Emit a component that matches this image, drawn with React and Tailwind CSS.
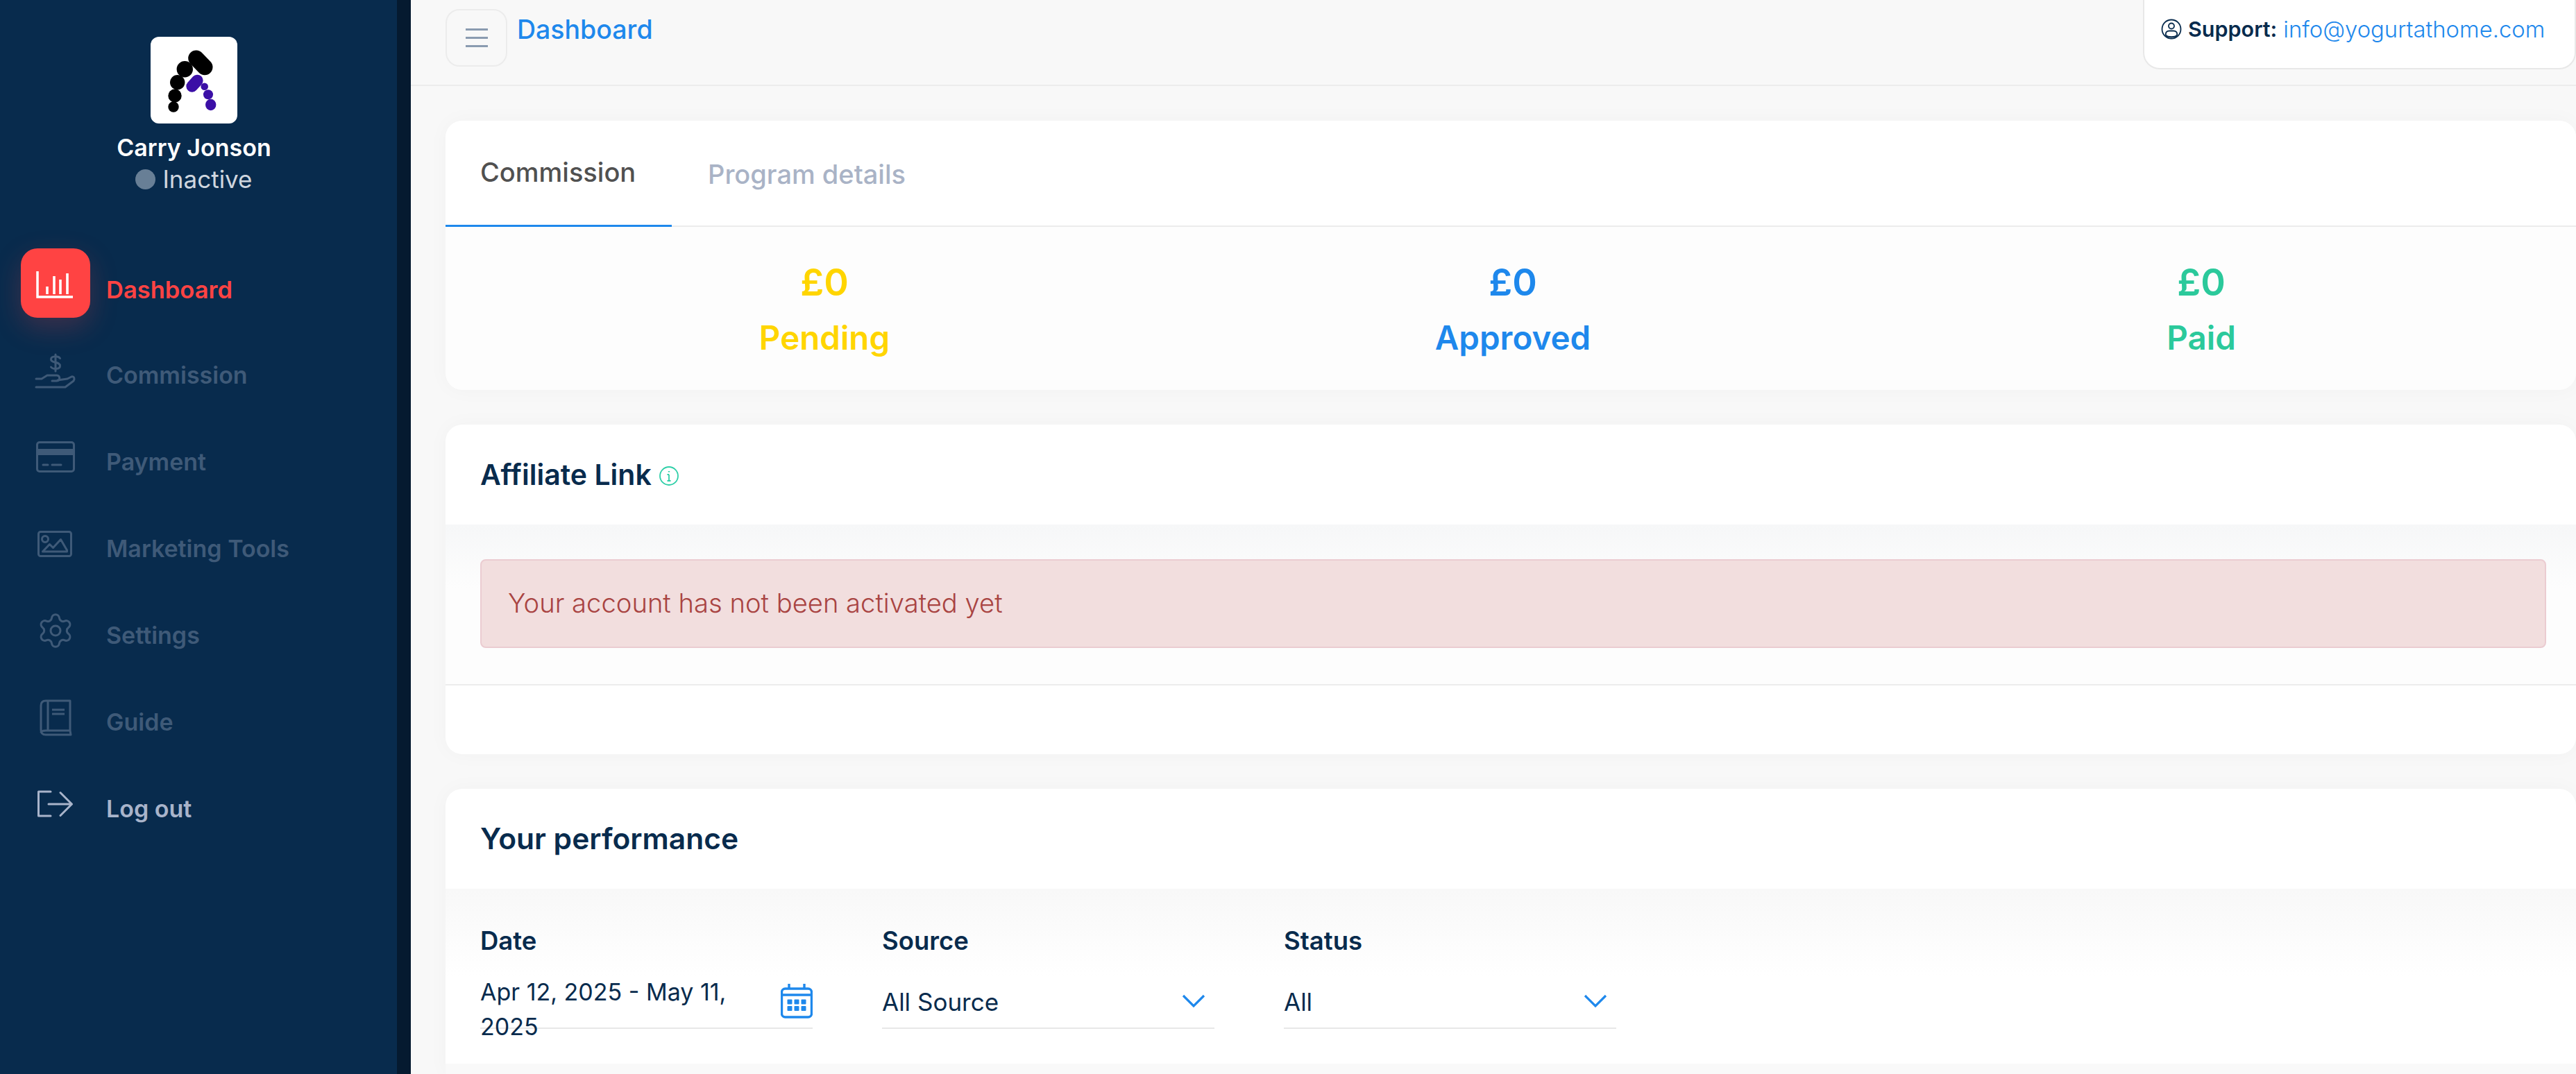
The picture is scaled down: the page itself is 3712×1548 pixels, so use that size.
import React from "react";
import { Settings } from "lucide-react";

function Logo() {
	return (
		<svg viewBox="0 0 125 125" className="w-[125px] h-[125px] rounded-[12px] bg-white">
			<circle cx="33" cy="101" r="7.7" fill="#000" />
			<circle cx="35" cy="85" r="9.7" fill="#000" />
			<circle cx="38.7" cy="65.7" r="10.7" fill="#000" />
			<circle cx="49.3" cy="46.7" r="11.7" fill="#000" />
			<path d="M65.7 31 L78 43.7" stroke="#000" strokeWidth="23" strokeLinecap="round" />
			<path d="M67.3 63 L59.7 71.3" stroke="#3b0fa6" strokeWidth="16.7" strokeLinecap="round" />
			<circle cx="77.7" cy="71.7" r="5.3" fill="#3b0fa6" />
			<circle cx="83" cy="83.3" r="7" fill="#3b0fa6" />
			<ellipse cx="86.7" cy="98" rx="7.7" ry="8.3" fill="#3b0fa6" />
		</svg>
	);
}

function ChartIcon() {
	return (
		<svg viewBox="0 0 60 46" className="w-[60px] h-[46px]" fill="none" stroke="#fff" strokeWidth="3.5">
			<path d="M4 6 V43 H55" />
			<path d="M18 28 V39 M28 13 V39 M37 18 V39 M47 9 V39" strokeWidth="3.6" />
		</svg>
	);
}

function HandIcon() {
	return (
		<svg viewBox="0 0 80 64" className="w-[80px] h-[64px]" fill="none" stroke="#3f5a78" strokeWidth="3" strokeLinecap="round" strokeLinejoin="round">
			<path d="M40 9 V33" />
			<path d="M46.5 14.5 C44 11 33.5 10.5 33.5 16 C33.5 22 46.5 18.5 46.5 25.5 C46.5 30.5 36 30.5 33.5 27" />
			<path d="M12 44 H20 L28 39 H42 C47 39 47 47 42 47 H35" />
			<path d="M43 46 L57 44 L63 41 C67 40 68 44 66 47 L54 56 H12" />
		</svg>
	);
}

function CardIcon() {
	return (
		<svg viewBox="0 0 80 50" className="w-[80px] h-[50px]" fill="none" stroke="#3f5a78" strokeWidth="3" strokeLinecap="round">
			<rect x="13.5" y="3.5" width="53" height="42" rx="3.5" />
			<rect x="13.5" y="13" width="53" height="9" fill="#3f5a78" stroke="none" />
			<path d="M22 36 H29 M35 36 H48" />
		</svg>
	);
}

function ImageIcon() {
	return (
		<svg viewBox="0 0 80 50" className="w-[80px] h-[50px]" fill="none" stroke="#3f5a78" strokeWidth="3" strokeLinejoin="round">
			<rect x="15.5" y="7.5" width="47" height="35" rx="3" />
			<circle cx="25" cy="18" r="4.5" />
			<path d="M21.5 36 L31.5 25.5 L36.5 30.5 L47.5 18.5 L56.5 34 V36 Z" />
		</svg>
	);
}

function BookIcon() {
	return (
		<svg viewBox="0 0 80 56" className="w-[80px] h-[56px]" fill="none" stroke="#3f5a78" strokeWidth="3" strokeLinejoin="round">
			<path d="M61 47 V4 H26 C21 4 19 7 19 11 V46 C19 51 22 53 26 53 H62 L61 47 H26 C22 47 19 48 19 50" />
			<path d="M29 4 V47" />
			<path d="M35 17 H53 M35 23 H53" />
		</svg>
	);
}

function LogoutIcon() {
	return (
		<svg viewBox="0 0 80 50" className="w-[80px] h-[50px]" fill="none" stroke="#a9b4ca" strokeWidth="3" strokeLinecap="round" strokeLinejoin="round">
			<path d="M33 7 H15.5 V42 H33" />
			<path d="M30 25 H63.5 M47 8.5 L63.5 25 L47 41.5" />
		</svg>
	);
}

function SupportIcon() {
	return (
		<svg viewBox="0 0 30 30" className="w-[30px] h-[30px] shrink-0" fill="none" stroke="#082b4d" strokeWidth="1.8">
			<circle cx="15" cy="15" r="13.5" />
			<circle cx="15" cy="10.5" r="4" />
			<path d="M7 24 C6 19 9 17.5 12 17.5 H18 C21 17.5 24 19 23 24" />
			<path d="M7 24 C10 27 20 27 23 24" />
		</svg>
	);
}

function InfoIcon() {
	return (
		<svg viewBox="0 0 30 30" className="w-[30px] h-[30px] shrink-0 mt-[4px]" fill="none" stroke="#2fcfa8" strokeWidth="1.8">
			<circle cx="15" cy="15" r="13" />
			<path d="M15 13 V22 M12.5 13 H15 M12.5 22 H17.5" />
			<path d="M15 8 V9.5" strokeWidth="2.4" />
		</svg>
	);
}

function CalendarIcon() {
	return (
		<svg viewBox="2 0 46 54" className="w-[46px] h-[54px] shrink-0" fill="none" stroke="#1e88ec" strokeWidth="3.4">
			<rect x="3.5" y="9" width="43" height="41" rx="5" />
			<path d="M3.5 18 H46.5" />
			<path d="M14 2 V9 M36 2 V9" />
			<g fill="#1e88ec" stroke="none">
				<rect x="11.5" y="24.5" width="7" height="7" rx="1" />
				<rect x="21.5" y="24.5" width="7" height="7" rx="1" />
				<rect x="31.5" y="24.5" width="7" height="7" rx="1" />
				<rect x="11.5" y="34" width="7" height="7" rx="1" />
				<rect x="21.5" y="34" width="7" height="7" rx="1" />
				<rect x="31.5" y="34" width="7" height="7" rx="1" />
			</g>
		</svg>
	);
}

function Chevron() {
	return (
		<svg viewBox="0 0 34 20" className="w-[34px] h-[20px] shrink-0 mr-[13px]" fill="none" stroke="#1e88ec" strokeWidth="3.2">
			<path d="M2 2 L17 17 L32 2" />
		</svg>
	);
}

const navItems = [
	{ label: "Commission", icon: <HandIcon /> },
	{ label: "Payment", icon: <CardIcon /> },
	{ label: "Marketing Tools", icon: <ImageIcon /> },
	{ label: "Settings", icon: <Settings size={56} strokeWidth={1.3} color="#3f5a78" /> },
	{ label: "Guide", icon: <BookIcon /> },
];

const stats = [
	{ label: "Pending", color: "text-[#ffd500]" },
	{ label: "Approved", color: "text-[#1e88ec]" },
	{ label: "Paid", color: "text-[#2bc99b]" },
];

function NavRow({ icon, label, textClass }) {
	return (
		<div className="flex items-center h-[125px] pl-[30px]">
			<div className="w-[100px] flex justify-center">{icon}</div>
			<span className={`ml-[23px] pt-[14px] text-[34px] font-semibold leading-[40px] ${textClass}`}>{label}</span>
		</div>
	);
}

function Sidebar() {
	return (
		<aside className="w-[592px] shrink-0 bg-[#082b4d] border-r-[20px] border-[#051a30] flex flex-col">
			<div className="flex flex-col items-center pt-[53px] pr-[13px] h-[358px]">
				<Logo />
				<div className="mt-[14px] text-[34px] leading-[42px] font-semibold text-white">Carry Jonson</div>
				<div className="mt-[3px] flex items-center gap-[10px] text-[35px] leading-[42px] text-[#cfd6df]">
					<span className="w-[29px] h-[29px] rounded-full bg-[#687f96]" />
					Inactive
				</div>
			</div>
			<div className="flex items-start h-[113px] pl-[30px]">
				<div className="w-[100px] h-[100px] rounded-[24px] bg-[#ff4343] flex items-center justify-center shadow-[0_14px_40px_rgba(255,67,67,0.22)]">
					<ChartIcon />
				</div>
				<span className="ml-[23px] pt-[40px] text-[34.5px] font-semibold leading-[40px] text-[#ff4343]">Dashboard</span>
			</div>
			{navItems.map((item) => (
				<NavRow key={item.label} icon={item.icon} label={item.label} textClass="text-[#3f5a78]" />
			))}
			<NavRow icon={<LogoutIcon />} label="Log out" textClass="text-[#a9b4ca]" />
		</aside>
	);
}

function Header() {
	return (
		<header className="h-[124px] shrink-0 border-b-2 border-[#ececec] pl-[50px] flex items-start">
			<button className="mt-[13px] w-[89px] h-[83px] rounded-[20px] border-2 border-[#ececec] flex flex-col items-center justify-center gap-[9px]">
				<span className="w-[32px] h-[3px] bg-[#8a9bb0]" />
				<span className="w-[32px] h-[3px] bg-[#8a9bb0]" />
				<span className="w-[32px] h-[3px] bg-[#8a9bb0]" />
			</button>
			<span className="ml-[14px] mt-[18px] text-[37.5px] leading-[50px] font-medium text-[#1e88ec]">Dashboard</span>
			<div className="ml-auto w-[624px] h-[100px] bg-white border-2 border-t-0 border-[#e8e8e8] rounded-b-[24px] pl-[24px] pt-[18px] flex items-center self-start">
				<div className="flex items-center gap-[9px] -mt-[32px] leading-[50px] whitespace-nowrap">
					<SupportIcon />
					<b className="text-[30.5px] font-semibold text-[#082b4d]">Support:</b>
					<span className="text-[32.8px] font-light text-[#1e88ec]">info@yogurtathome.com</span>
				</div>
			</div>
		</header>
	);
}

function CommissionCard() {
	return (
		<section className="h-[388px] shrink-0 bg-[#fdfdfd] rounded-[24px] overflow-hidden shadow-[0_0_30px_rgba(0,0,0,0.03)]">
			<div className="h-[153px] bg-white border-b-2 border-[#ececec] flex">
				<div className="w-[326px] h-[153px] border-b-[3px] border-[#1e88ec] pl-[50px] pt-[49px] text-[38px] leading-[50px] font-medium text-[#505050]">Commission</div>
				<div className="pl-[52px] pt-[52px] text-[38px] leading-[50px] font-medium text-[#a9b3c6]">Program details</div>
			</div>
			<div className="grid grid-cols-3 pl-[50px] pr-[44px]">
				{stats.map(({ label, color }) => (
					<div key={label} className={`text-center font-semibold ${color}`}>
						<div className="mt-[50px] text-[54px] leading-[60px]">£0</div>
						<div className="mt-[20px] text-[47.5px] leading-[60px]">{label}</div>
					</div>
				))}
			</div>
		</section>
	);
}

function AffiliateCard() {
	return (
		<section className="h-[475px] shrink-0 bg-white rounded-[24px] overflow-hidden shadow-[0_0_30px_rgba(0,0,0,0.03)]">
			<div className="h-[144px] pl-[50px] flex items-center gap-[10px]">
				<h2 className="text-[41px] leading-[50px] font-semibold text-[#082b4d]">Affiliate Link</h2>
				<InfoIcon />
			</div>
			<div className="h-[232px] border-b-2 border-[#ececec] pt-[50px] pl-[50px] pr-[43px] bg-gradient-to-b from-[#f6f7f8] to-[#fdfdfd] to-40%">
				<div className="h-[128px] rounded-[8px] border-2 border-[#ebccd1] bg-[#f2dede] pl-[38px] flex items-center text-[38.2px] font-light text-[#a94442]">
					Your account has not been activated yet
				</div>
			</div>
		</section>
	);
}

function Field({ label, children }) {
	return (
		<div className="w-[479px]">
			<div className="text-[36.5px] leading-[40px] font-semibold text-[#082b4d]">{label}</div>
			<div className="mt-[29px] h-[78px] border-b-2 border-[#e8e8e8] flex items-center justify-between text-[34px] leading-[50px] text-[#082b4d]">
				{children}
			</div>
		</div>
	);
}

function PerformanceCard() {
	return (
		<section className="flex-1 bg-white rounded-t-[24px] overflow-hidden shadow-[0_0_30px_rgba(0,0,0,0.03)] flex flex-col">
			<div className="h-[144px] shrink-0 pl-[50px] flex items-center">
				<h2 className="text-[42.5px] leading-[50px] font-semibold text-[#082b4d]">Your performance</h2>
			</div>
			<div className="h-[252px] shrink-0 pl-[50px] pt-[55px] flex gap-[100px] bg-gradient-to-b from-[#f8f8f8] to-white to-50%">
				<Field label="Date">
					<span className="self-start whitespace-nowrap">
						Apr 12, 2025 - May 11,
						<br />
						2025
					</span>
					<CalendarIcon />
				</Field>
				<Field label="Source">
					<span className="pt-[2px] text-[35px]">All Source</span>
					<Chevron />
				</Field>
				<Field label="Status">
					<span className="pt-[2px] text-[35px]">All</span>
					<Chevron />
				</Field>
			</div>
			<div className="flex-1 bg-[#f9f9f9]" />
		</section>
	);
}

export default function App() {
	return (
		<div className="w-[3712px] h-[1548px] overflow-hidden flex bg-[#f8f8f8] [font-family:Inter,sans-serif]">
			<Sidebar />
			<main className="flex-1 min-w-0 flex flex-col">
				<Header />
				<div className="flex-1 min-h-0 pl-[50px] pt-[50px] flex flex-col gap-[50px]">
					<CommissionCard />
					<AffiliateCard />
					<PerformanceCard />
				</div>
			</main>
		</div>
	);
}
